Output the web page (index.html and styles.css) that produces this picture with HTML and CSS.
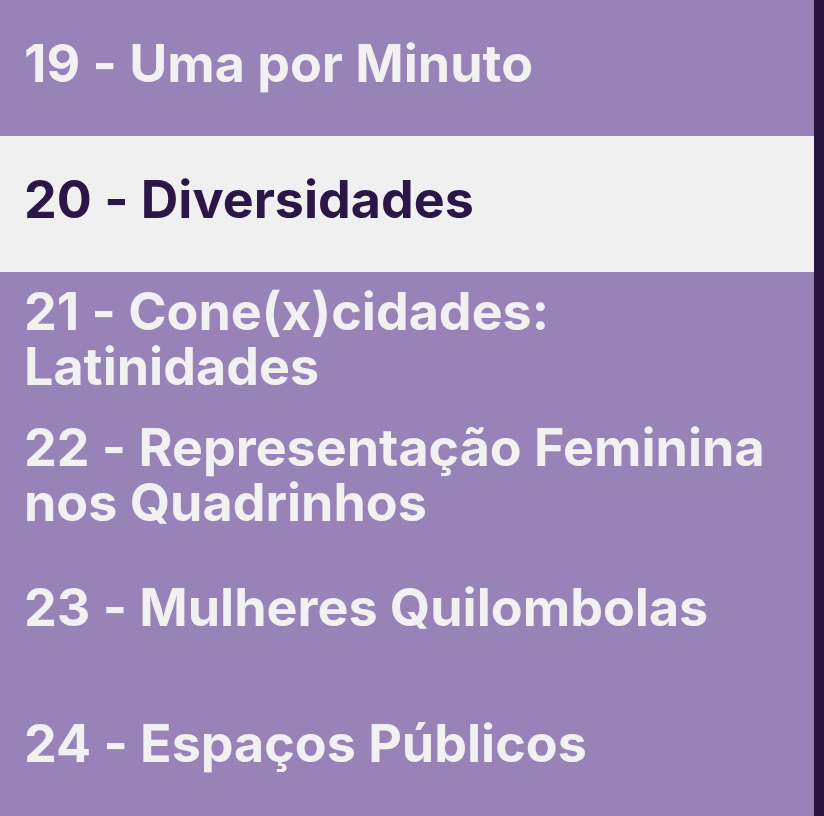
FILE: index.html
```html
<!DOCTYPE html>
<html lang="pt-BR">
<head>
<meta charset="utf-8">
<title>Temas</title>
<link rel="stylesheet" href="styles.css">
</head>
<body>
<div class="layout">
  <ul class="menu">
    <li class="item">19 - Uma por Minuto</li>
    <li class="item active">20 - Diversidades</li>
    <li class="item two">21 - Cone(x)cidades: Latinidades</li>
    <li class="item two">22 - Representação Feminina nos Quadrinhos</li>
    <li class="item">23 - Mulheres Quilombolas</li>
    <li class="item">24 - Espaços Públicos</li>
  </ul>
  <div class="bar"></div>
</div>
</body>
</html>
```
FILE: styles.css
```css
html, body {
  margin: 0;
  padding: 0;
  height: 100%;
  overflow: hidden;
}
body {
  background: #9883b8;
  font-family: Inter, "Open Sans", sans-serif;
}
.layout {
  display: flex;
  height: 816px;
}
.menu {
  flex: 1;
  margin: 0;
  padding: 0;
  list-style: none;
  display: flex;
  flex-direction: column;
}
.item {
  height: 136px;
  box-sizing: border-box;
  padding: 0 40px 10px 24px;
  display: flex;
  align-items: center;
  color: #f1f1f1;
  font-size: 52px;
  font-weight: 700;
  line-height: 55px;
  font-feature-settings: "calt" 0;
}
.item.two {
  padding-bottom: 3px;
}
.item.active {
  background: #f0f0f0;
  color: #2a1647;
}
.bar {
  width: 10px;
  background: #28143f;
}
```
